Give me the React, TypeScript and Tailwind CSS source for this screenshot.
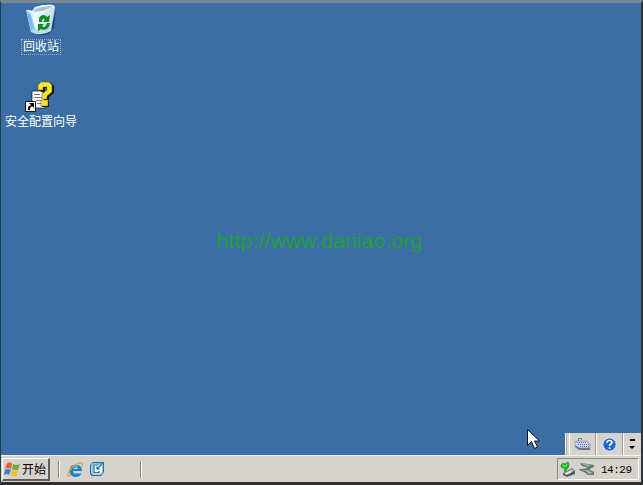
import type { ReactNode } from 'react';

const uiFont = "font-['Noto_Sans_CJK_SC','Liberation_Sans',sans-serif]";

function RecycleBin() {
  return (
    <svg width="32" height="32" viewBox="0 0 32 32">
      <defs>
        <linearGradient id="bin" x1="0" y1="0" x2="1" y2="0.3">
          <stop offset="0" stopColor="#8ccdf2" />
          <stop offset="0.4" stopColor="#f2fafd" />
          <stop offset="1" stopColor="#c3dce8" />
        </linearGradient>
      </defs>
      <path d="M6 28 Q15 34 25 29 L29 24 L31 6 L25 27z" fill="#1d426c" opacity=".75" />
      <path d="M1 6 Q4 5 7 7 L10 3 Q20 0 28 1 L30 3 L26 27 Q16 33 6 28Z" fill="url(#bin)" />
      <path d="M1 6 Q8 12 20 8 Q25 4 30 3 L28 1 Q17 0 11 4 L7 7Z" fill="#e9f7fb" />
      <path d="M10 5 Q18 2 28 2 L23 5 Q16 8 9 8Z" fill="#a8c3d4" />
      <path d="M2 8 L6 27 Q11 30 17 29 L10 25 L6 11Z" fill="#58aee2" opacity=".75" />
      <path d="M6 27 Q17 32 26 26 L26 23 Q17 27 8 25Z" fill="#b5ddf5" />
      <g fill="#118c20">
        <path d="M14 18 Q13 12 18 11 Q21 11 22 13 L25 11 L24 18 L18 18 L20 15 Q17 14 17 18Z" />
        <path d="M25 19 Q24 26 18 26 L16 25 L13 27 L13 20 L19 20 L17 22 Q20 25 22 19Z" />
      </g>
    </svg>
  );
}

function WizardIcon() {
  return (
    <svg width="32" height="32" viewBox="0 0 32 32">
      <path d="M7 10h11v3h2v14H7z" fill="#fff" stroke="#111" strokeWidth=".7" />
      <path d="M9 13.500h6M9 16.500h8M11 19.500h7M12 22.500h6" stroke="#777d82" />
      <path d="M15 9V5l3-3h8l3 3v7l-5 4v3h-5v-5l5-4V7h-4v4h-4zM17 20h7v6h-7z" fill="#171700" />
      <path d="M13 9V4l3-3h8l3 3v7l-5 4v3h-5v-5l5-4V6h-4v3h-5zM16 19h7v6h-7z" fill="#f5e833" stroke="#555000" strokeWidth=".5" />
      <path d="M.5 20.500h10v10H.5z" fill="#fff" stroke="#111" />
      <path d="M3 29v-3l3-2-2-2h5v5l-2-2-2 2v2z" fill="#000" />
    </svg>
  );
}

function FlagIcon() {
  return (
    <svg width="17" height="16" viewBox="0 0 17 16">
      <path d="M3 2.500q3-2 5 0L7 8Q4 6 1 8z" fill="#e85a29" />
      <path d="M9 3q3 2 7 0l-2 6q-3 1-6-1z" fill="#69ad35" />
      <path d="M1 9q3-2 6 0l-2 5q-2-2-5 0z" fill="#427bd6" />
      <path d="M8 9q3 2 6 1l-1 5q-3 1-6-1z" fill="#f4bd24" />
    </svg>
  );
}

function ExplorerIcon() {
  return (
    <svg width="17" height="17" viewBox="0 0 17 17">
      <path d="M15 10H6Q6 13 9.500 12.500h5Q13 16 8 16 2.500 15 2.500 9.500 3 3.500 9 3.500q6 .5 6 6.500M6 8h5.500Q9 4.500 6 8" fill="#1682cd" fillRule="evenodd" />
      <path d="M4 8q2-4 7-3" stroke="#8bd8f7" fill="none" />
      <path d="M4 14Q-.5 17 1.500 12 4 6 11 2.500q6-2.500 4 2.500" stroke="#dda52d" fill="none" strokeWidth="1.300" />
    </svg>
  );
}

function DesktopIcon() {
  return (
    <svg width="16" height="16" viewBox="0 0 16 16">
      <path d="M4 1h11v10l-3 4H3l-2-2V4z" fill="#286c9c" />
      <path d="m4 2 10 .5V11l-2 3H4l-2-2V4z" fill="#9ccce5" />
      <path d="M5 3.500 13 4v7l-3 1.500H4z" fill="#f7fcff" />
      <path d="M9.500 4H5v7.500h5V10M8 8l5-5M8 5.500V8h3" fill="none" stroke="#216c9c" strokeWidth="1.200" />
    </svg>
  );
}

function KeyboardIcon() {
  return (
    <svg width="17" height="16" viewBox="0 0 17 16">
      <path d="M4.500 5V2.500h3V4" stroke="#667d99" fill="none" />
      <path d="M1 5h12l3 3v6H5l-4-3z" fill="#6e7888" />
      <path d="M1 5h12l3 3v4H5L1 9z" fill="#cdd6f1" stroke="#7183a1" strokeWidth=".6" />
      <path d="M3 6.500h10M4 8.500h11M6 10.500h9" stroke="#5868aa" strokeDasharray="1 1" />
    </svg>
  );
}

function HelpIcon() {
  return (
    <svg width="15" height="15" viewBox="0 0 15 15">
      <circle cx="7.500" cy="7.500" r="6.700" fill="#2467c7" stroke="#e7effa" />
      <path d="M5 5.700Q5 3.500 7.500 3.500T10 5.500C10 7 7.500 7 7.500 9" fill="none" stroke="#fff" strokeWidth="1.600" />
      <path d="M6.700 10.300h1.700V12H6.700z" fill="#fff" />
    </svg>
  );
}

function EjectIcon() {
  return (
    <svg width="16" height="17" viewBox="0 0 16 17">
      <path d="m3 12 9-5 3 3v3l-8 3-4-2z" fill="#555b5b" />
      <path d="m4 12 8-4 2 2-8 4z" fill="#cbd0cc" stroke="#788380" strokeWidth=".5" />
      <path d="m6 13 5-2" stroke="#fff" />
      <path d="M1 4 3 2l2 1 3-2 1 2-1 4-2 2v2l-2-1 1-2-4-2z" fill="#24bf31" stroke="#167923" strokeWidth=".6" />
      <path d="m2.500 4.500 3 1L7 3" stroke="#7fe57f" fill="none" />
    </svg>
  );
}

function NetworkIcon() {
  return (
    <svg width="17" height="16" viewBox="0 0 17 16">
      <path d="m1 2 8 1 6 1-5 3-7-2zM3 9l5-2 7 4v3H9z" fill="#68746d" />
      <path d="m2 2.500 7 1 3 1-3 1zM6 9h3l5 3-4 1z" fill="#adb8b0" />
      <path d="M15 5 8 8l-6 1 5 2" stroke="#4b755f" strokeWidth="1.500" fill="none" />
      <path d="m3 10 5-1" stroke="#9bb3a3" />
    </svg>
  );
}

function Divider() {
  return <div className="h-[17px] w-[2px] shrink-0 border-l border-[#87857f] bg-white" />;
}

function LanguageButton({ children, className }: { children: ReactNode; className: string }) {
  return <div className={`flex h-full items-center justify-center border-r border-[#9b9a93] border-l border-l-white ${className}`}>{children}</div>;
}

export default function App() {
  return (
    <div className={`flex h-[485px] w-[643px] flex-col overflow-hidden border-t-[3px] border-r-2 border-b-[3px] border-l border-t-[#768895] border-r-[#303638] border-b-[#302d2d] border-l-[#263d50] bg-[#d6d3cc] ${uiFont}`}>
      <main className="relative h-[452px] shrink-0 bg-[#3b6ea5] text-white">
        <div className="absolute left-[20px] top-0 flex w-[40px] flex-col items-center">
          <div className="mt-px h-[32px] w-[32px]"><RecycleBin /></div>
          <div className="mt-[3px] h-[16px] w-[40px] border border-dotted border-[#a1afb9] text-center text-[12px] leading-[12px] whitespace-nowrap">回收站</div>
        </div>
        <div className="absolute left-[4px] top-[78px] flex w-[72px] flex-col items-center">
          <div className="h-[32px] w-[32px]"><WizardIcon /></div>
          <div className="h-[15px] text-[12px] leading-[15px] whitespace-nowrap">安全配置向导</div>
        </div>
        <div className="absolute left-[216px] top-[226px] font-['Liberation_Sans',sans-serif] text-[21px] leading-[24px] tracking-[0.160px] whitespace-nowrap text-[#21a135]">http://www.daniao.org</div>
        <div className="absolute right-0 bottom-0 flex h-[22px] w-[76px] bg-[#d6d3cc]">
          <div className="mr-[2px] w-[2px] border-r border-[#aaa] bg-white" />
          <LanguageButton className="w-[27px]"><KeyboardIcon /></LanguageButton>
          <LanguageButton className="w-[27px]"><HelpIcon /></LanguageButton>
          <div className="flex w-[17px] flex-col items-center justify-center gap-[5px] border-l border-white">
            <div className="h-[2px] w-[5px] bg-black" />
            <div className="h-0 w-0 border-x-[3px] border-t-[3px] border-x-transparent border-t-black" />
          </div>
        </div>
        <svg className="absolute left-[525px] top-[425px]" width="14" height="22" viewBox="0 0 14 22">
          <path d="M1.500 1.500v16l4-4 3 7 3-1.500-3-6h5z" fill="#fff" stroke="#111" strokeWidth="1" />
        </svg>
      </main>
      <footer className="flex h-[27px] shrink-0 items-center border-t border-[#f4f2ed] text-black">
        <div className="ml-px mt-px flex h-[23px] w-[48px] items-center border-t border-l border-r-2 border-b-2 border-t-white border-l-white border-r-[#5d5d59] border-b-[#5d5d59] pl-px">
          <FlagIcon />
          <span className="ml-px text-[12px] leading-[18px] whitespace-nowrap">开始</span>
        </div>
        <div className="ml-[8px]"><Divider /></div>
        <div className="ml-[7px] flex w-[73px] gap-[5px]"><ExplorerIcon /><DesktopIcon /></div>
        <Divider />
        <div className="ml-auto mr-[2px] flex h-[22px] w-[82px] items-center border border-t-[#8d8b84] border-r-white border-b-white border-l-[#8d8b84] pl-[2px]">
          <EjectIcon />
          <div className="ml-[3px]"><NetworkIcon /></div>
          <span className="ml-[5px] mt-[3px] font-['Liberation_Mono',monospace] text-[11px] tracking-[-0.500px]">14:29</span>
        </div>
      </footer>
    </div>
  );
}
